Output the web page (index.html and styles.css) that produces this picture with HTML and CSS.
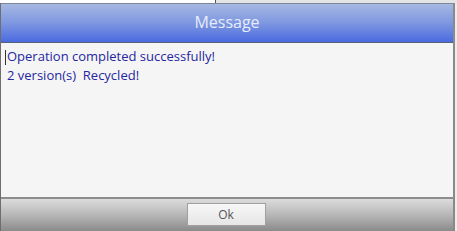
FILE: index.html
```html
<!DOCTYPE html>
<html lang="en">
<head>
    <meta charset="UTF-8">
    <title>Message</title>
    <link rel="stylesheet" href="styles.css">
</head>
<body>
    <!-- strip of the window behind the dialog -->
    <div class="behind">
        <div class="behind-left"></div>
        <div class="behind-right"></div>
    </div>

    <div class="dialog">
        <div class="header">Message</div>
        <div class="content">
            <span class="caret"></span>
            <p>Operation completed successfully!</p>
            <p>2 version(s)&nbsp; Recycled!</p>
        </div>
        <div class="footer">
            <button class="ok">Ok</button>
        </div>
    </div>
</body>
</html>
```

FILE: styles.css
```css
body {
    margin: 0;
    width: 457px;
    height: 231px;
    overflow: hidden;
    background-color: #ececec;
    font-family: "Open Sans", "Noto Sans", sans-serif;
}
.behind {
    display: flex;
    height: 3px;
}
.behind-left {
    width: 215px;
    background-color: #ffffff;
    border-right: 1px solid #555555;
}
.behind-right {
    flex: 1;
    background-color: #e4e4e4;
}
.dialog {
    width: 452px;
    border-left: 1px solid #6e6e6e;
    border-right: 2px solid #8a8a8a;
}
.header {
    height: 38px;
    line-height: 36px;
    text-align: center;
    font-size: 16px;
    color: #e6ecfb;
    background: linear-gradient(#a6b8e2, #7e97e0 50%, #4a6be0);
    border-top: 1px solid #7c8799;
    border-bottom: 1px solid #566277;
}
.content {
    position: relative;
    height: 150px;
    padding: 4px 6px 0;
    background-color: #f5f5f5;
    border-bottom: 2px solid #8c8c8c;
    color: #2626a0;
    font-size: 13px;
    line-height: 19px;
}
.content p {
    margin: 0;
}
/* text cursor at the start of the message */
.caret {
    position: absolute;
    left: 4px;
    top: 7px;
    width: 1px;
    height: 15px;
    background-color: #333333;
}
.footer {
    height: 34px;
    display: flex;
    justify-content: center;
    align-items: flex-start;
    padding-top: 4px;
    box-sizing: border-box;
    background: linear-gradient(#dcdcdc, #b4b4b4 50%, #858585);
}
.ok {
    width: 79px;
    height: 23px;
    margin-left: -2px;
    padding: 0;
    border: 1px solid #a0a0a0;
    background: linear-gradient(#f7f7f7, #e6e6e6);
    color: #555555;
    font-family: "Open Sans", "Noto Sans", sans-serif;
    font-size: 12px;
}
```
